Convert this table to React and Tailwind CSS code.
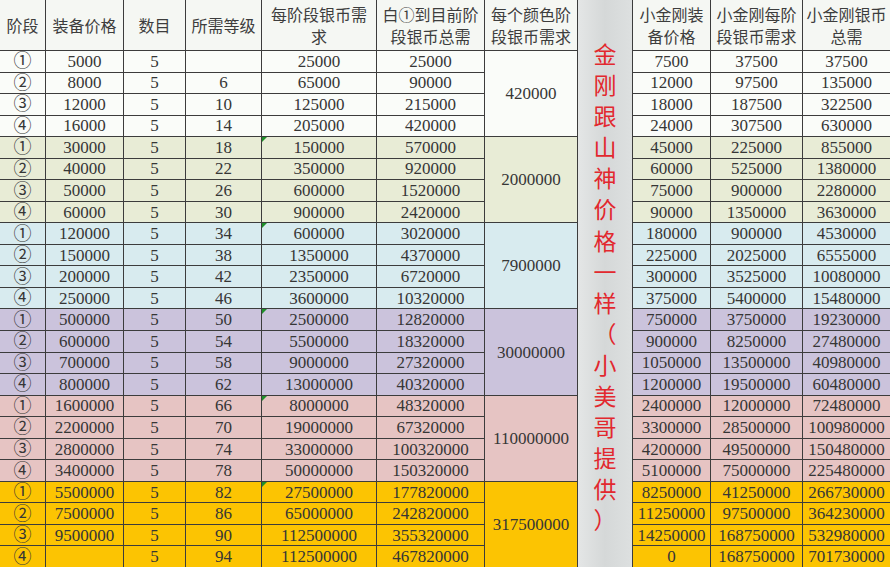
import React from "react";

const NUM_FONT = { fontFamily: '"Liberation Serif", "Noto Sans CJK SC", serif' };
const CJK_FONT = { fontFamily: '"Noto Sans CJK SC", "Noto Sans", sans-serif' };

const MARKS = ["①", "②", "③", "④"];

// each group: colour, merged total, rows [price, level, stage, cumulative, kkPrice, kkStage, kkTotal]
const GROUPS = [
  {
    bg: "bg-[#fafcf9]",
    total: "420000",
    rows: [
      ["5000", "", "25000", "25000", "7500", "37500", "37500"],
      ["8000", "6", "65000", "90000", "12000", "97500", "135000"],
      ["12000", "10", "125000", "215000", "18000", "187500", "322500"],
      ["16000", "14", "205000", "420000", "24000", "307500", "630000"],
    ],
  },
  {
    bg: "bg-[#e8ecd6]",
    total: "2000000",
    rows: [
      ["30000", "18", "150000", "570000", "45000", "225000", "855000"],
      ["40000", "22", "350000", "920000", "60000", "525000", "1380000"],
      ["50000", "26", "600000", "1520000", "75000", "900000", "2280000"],
      ["60000", "30", "900000", "2420000", "90000", "1350000", "3630000"],
    ],
  },
  {
    bg: "bg-[#d8ebef]",
    total: "7900000",
    rows: [
      ["120000", "34", "600000", "3020000", "180000", "900000", "4530000"],
      ["150000", "38", "1350000", "4370000", "225000", "2025000", "6555000"],
      ["200000", "42", "2350000", "6720000", "300000", "3525000", "10080000"],
      ["250000", "46", "3600000", "10320000", "375000", "5400000", "15480000"],
    ],
  },
  {
    bg: "bg-[#cbc3dc]",
    total: "30000000",
    rows: [
      ["500000", "50", "2500000", "12820000", "750000", "3750000", "19230000"],
      ["600000", "54", "5500000", "18320000", "900000", "8250000", "27480000"],
      ["700000", "58", "9000000", "27320000", "1050000", "13500000", "40980000"],
      ["800000", "62", "13000000", "40320000", "1200000", "19500000", "60480000"],
    ],
  },
  {
    bg: "bg-[#e6c4c3]",
    total: "110000000",
    rows: [
      ["1600000", "66", "8000000", "48320000", "2400000", "12000000", "72480000"],
      ["2200000", "70", "19000000", "67320000", "3300000", "28500000", "100980000"],
      ["2800000", "74", "33000000", "100320000", "4200000", "49500000", "150480000"],
      ["3400000", "78", "50000000", "150320000", "5100000", "75000000", "225480000"],
    ],
  },
  {
    bg: "bg-[#fcc402]",
    total: "317500000",
    rows: [
      ["5500000", "82", "27500000", "177820000", "8250000", "41250000", "266730000"],
      ["7500000", "86", "65000000", "242820000", "11250000", "97500000", "364230000"],
      ["9500000", "90", "112500000", "355320000", "14250000", "168750000", "532980000"],
      ["", "94", "112500000", "467820000", "0", "168750000", "701730000"],
    ],
  },
];

const LEFT_HEAD = [
  ["阶段"],
  ["装备价格"],
  ["数目"],
  ["所需等级"],
  ["每阶段银币需", "求"],
  ["白①到目前阶", "段银币总需"],
  ["每个颜色阶", "段银币需求"],
];

const RIGHT_HEAD = [
  ["小金刚装", "备价格"],
  ["小金刚每阶", "段银币需求"],
  ["小金刚银币", "总需"],
];

const SIDE_TEXT = "金刚跟山神价格一样（小美哥提供）".split("");

function Head({ lines }) {
  return (
    <div
      className="flex flex-col items-center justify-center bg-[#f5f7f3] text-[16px] leading-[22px] text-[#3d3d3d]"
      style={CJK_FONT}
    >
      {lines.map((l) => (
        <span key={l}>{l}</span>
      ))}
    </div>
  );
}

function Cell({ bg, children, mark, className = "" }) {
  return (
    <div
      className={`relative flex items-center justify-center text-[17px] leading-none text-[#363636] ${bg} ${className}`}
      style={NUM_FONT}
    >
      {mark && (
        <span className="absolute left-0 top-0 h-0 w-0 border-l-[5px] border-b-[5px] border-l-[#1f8f2a] border-b-transparent" />
      )}
      {children}
    </div>
  );
}

export default function App() {
  return (
    <div className="flex h-[567px] w-[890px] overflow-hidden bg-[#3c3c3c]">
      {/* main table */}
      <div className="grid h-full grid-cols-[45px_77px_61px_75px_114px_107px_92px] grid-rows-[50px_repeat(24,minmax(0,1fr))] gap-px border-r border-[#3c3c3c]">
        {LEFT_HEAD.map((h, i) => (
          <Head key={i} lines={h} />
        ))}
        {GROUPS.map((g, gi) =>
          g.rows.map((r, ri) => (
            <React.Fragment key={`${gi}-${ri}`}>
              <Cell bg={g.bg}>
                <span className="text-[18px]">{MARKS[ri]}</span>
              </Cell>
              <Cell bg={g.bg}>{r[0]}</Cell>
              <Cell bg={g.bg}>5</Cell>
              <Cell bg={g.bg}>{r[1]}</Cell>
              <Cell bg={g.bg} mark={gi > 0 && ri === 0}>{r[2]}</Cell>
              <Cell bg={g.bg}>{r[3]}</Cell>
              {ri === 0 && (
                <Cell bg={g.bg} className="row-span-4">
                  {g.total}
                </Cell>
              )}
            </React.Fragment>
          ))
        )}
      </div>

      {/* grey divider with note */}
      <div
        className="flex h-full w-[54px] flex-col items-center bg-gradient-to-r from-[#e4e6e6] via-[#d5d8d8] to-[#dde0e0] pt-[38px] text-[23px] text-[#e2282e]"
        style={CJK_FONT}
      >
        {SIDE_TEXT.map((c, i) => (
          <span key={i} className="block h-[31.1px] leading-[31.1px]">
            {c}
          </span>
        ))}
      </div>

      {/* small kingkong table */}
      <div className="grid h-full grid-cols-[77px_91px_87px] grid-rows-[50px_repeat(24,minmax(0,1fr))] gap-px border-l border-[#3c3c3c]">
        {RIGHT_HEAD.map((h, i) => (
          <Head key={i} lines={h} />
        ))}
        {GROUPS.map((g, gi) =>
          g.rows.map((r, ri) => (
            <React.Fragment key={`${gi}-${ri}`}>
              <Cell bg={g.bg}>{r[4]}</Cell>
              <Cell bg={g.bg}>{r[5]}</Cell>
              <Cell bg={g.bg}>{r[6]}</Cell>
            </React.Fragment>
          ))
        )}
      </div>
    </div>
  );
}
